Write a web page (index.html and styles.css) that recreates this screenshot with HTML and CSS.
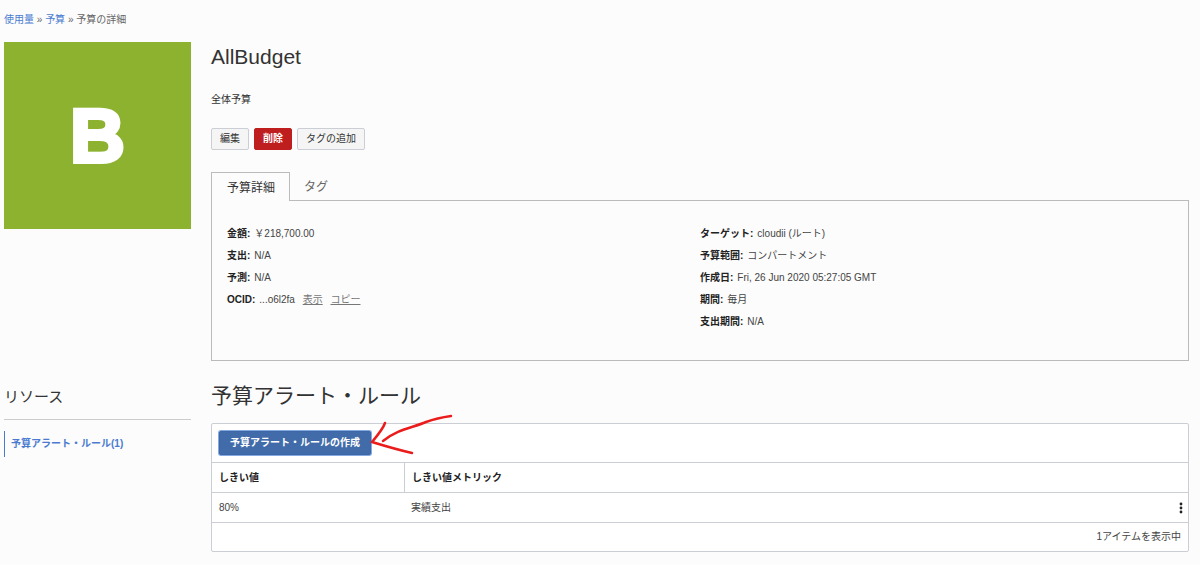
FILE: index.html
```html
<!DOCTYPE html>
<html lang="ja">
<head>
    <meta charset="UTF-8">
    <title>予算の詳細</title>
    <link rel="stylesheet" href="styles.css">
</head>
<body>
    <nav class="breadcrumb">
        <a href="#">使用量</a> » <a href="#">予算</a> » <span>予算の詳細</span>
    </nav>

    <div class="page">
        <div class="badge">B</div>

        <main class="summary">
            <h1>AllBudget</h1>
            <p class="description">全体予算</p>
            <div class="actions">
                <button type="button" class="btn">編集</button>
                <button type="button" class="btn btn-danger">削除</button>
                <button type="button" class="btn">タグの追加</button>
            </div>

            <div class="tabs" role="tablist">
                <button type="button" class="tab active" role="tab" aria-selected="true">予算詳細</button>
                <button type="button" class="tab" role="tab" aria-selected="false">タグ</button>
            </div>
            <div class="panel">
                <dl class="details">
                    <div><dt>金額:</dt><dd>￥218,700.00</dd></div>
                    <div><dt>支出:</dt><dd>N/A</dd></div>
                    <div><dt>予測:</dt><dd>N/A</dd></div>
                    <div><dt>OCID:</dt><dd class="ocid">...o6l2fa <a href="#">表示</a> <a href="#">コピー</a></dd></div>
                </dl>
                <dl class="details">
                    <div><dt>ターゲット:</dt><dd>cloudii (ルート)</dd></div>
                    <div><dt>予算範囲:</dt><dd>コンパートメント</dd></div>
                    <div><dt>作成日:</dt><dd>Fri, 26 Jun 2020 05:27:05 GMT</dd></div>
                    <div><dt>期間:</dt><dd>毎月</dd></div>
                    <div><dt>支出期間:</dt><dd>N/A</dd></div>
                </dl>
            </div>
        </main>

        <aside class="resources">
            <h3>リソース</h3>
            <a href="#rules" class="resource-link">予算アラート・ルール(1)</a>
        </aside>

        <section class="rules" id="rules">
            <h2>予算アラート・ルール</h2>
            <div class="table-box">
                <div class="toolbar">
                    <div class="create">
                        <button type="button" class="btn btn-primary">予算アラート・ルールの作成</button>
                        <svg class="arrow" width="84" height="42" viewBox="0 0 84 42" aria-hidden="true">
                            <path d="M14 5C12 11 6 18 1 24C14 28 28 32 41 35M12 23C27 11 41 10 55 4C66 0 73-1 80-2" />
                        </svg>
                    </div>
                </div>
                <table>
                    <thead>
                        <tr>
                            <th class="col-threshold">しきい値</th>
                            <th colspan="2">しきい値メトリック</th>
                        </tr>
                    </thead>
                    <tbody>
                        <tr>
                            <td>80%</td>
                            <td>実績支出</td>
                            <td class="col-menu">
                                <button type="button" class="menu" aria-label="アクション">
                                    <svg width="4" height="12" viewBox="0 0 4 12">
                                        <circle cx="2" cy="2" r="1.4" />
                                        <circle cx="2" cy="6" r="1.4" />
                                        <circle cx="2" cy="10" r="1.4" />
                                    </svg>
                                </button>
                            </td>
                        </tr>
                    </tbody>
                </table>
                <div class="table-footer">1アイテムを表示中</div>
            </div>
        </section>
    </div>
</body>
</html>
```

FILE: styles.css
```css
* {
    box-sizing: border-box;
}
body {
    margin: 0;
    padding: 12px 11px 12px 4px;
    background: #fcfcfc;
    color: #444;
    font-family: "Liberation Sans", "Noto Sans CJK JP", sans-serif;
    font-size: 10px;
    line-height: 16px;
}
a {
    color: #4a7bd0;
    text-decoration: none;
}
h1, h2, h3, p, dl, dd {
    margin: 0;
}
h1, h2, h3 {
    color: #333;
    font-weight: normal;
}
button {
    font-family: inherit;
    cursor: pointer;
}
.breadcrumb {
    margin-bottom: 14px;
    color: #666;
}
.page {
    display: grid;
    grid-template-columns: 187px minmax(0, 1fr);
    column-gap: 20px;
    row-gap: 20px;
}
.badge {
    display: flex;
    align-items: center;
    justify-content: center;
    height: 187px;
    background: #8db230;
    color: #fff;
    font-size: 76px;
    font-weight: bold;
    -webkit-text-stroke: 4px #fff;
}
h1 {
    font-size: 21px;
    line-height: 30px;
}
.description {
    margin: 20px 0;
    color: #333;
}
.actions {
    display: flex;
    gap: 5px;
    margin-bottom: 22px;
}
.btn {
    height: 22px;
    padding: 0 8px;
    border: 1px solid #ccced6;
    border-radius: 2px;
    background: #f5f5f5;
    color: #333;
    font-size: 10px;
    line-height: 16px;
}
.btn-danger {
    border-color: #bf1e1e;
    background: #bf1e1e;
    color: #fff;
    font-weight: bold;
}
.btn-primary {
    height: 24px;
    padding: 0 10px;
    border-color: #3c68a8;
    background: #426ca9;
    box-shadow: 0 0 0 1px #86a9e2;
    color: #fff;
    font-weight: bold;
}
.tabs {
    display: flex;
}
.tab {
    height: 28px;
    padding: 0 14px 2px;
    border: 0;
    background: none;
    color: #666;
    font-size: 12px;
}
.tab.active {
    height: 29px;
    margin-bottom: -1px;
    border: 1px solid #bbb;
    border-bottom: 0;
    background: #fcfcfc;
    color: #333;
    padding-left: 15px;
    z-index: 1;
}
.panel {
    display: grid;
    grid-template-columns: 1fr 1fr;
    min-height: 161px;
    padding: 22px 15px;
    border: 1px solid #bbb;
}
.details div {
    display: flex;
    gap: 4px;
    height: 22px;
    line-height: 22px;
}
.details dt {
    color: #222;
    font-weight: bold;
}
.ocid a {
    margin-left: 5px;
    color: #777;
    text-decoration: underline;
}
.resources {
    padding-top: 4px;
}
.resources h3 {
    padding-bottom: 10px;
    border-bottom: 1px solid #ccc;
    font-size: 15px;
    line-height: 24px;
}
.resource-link {
    display: block;
    margin-top: 11px;
    padding-left: 6px;
    border-left: 1px solid #4a7bd0;
    font-weight: bold;
    line-height: 26px;
}
.rules h2 {
    margin-bottom: 12px;
    font-size: 21px;
    line-height: 30px;
}
.table-box {
    border: 1px solid #ccced6;
    border-radius: 2px;
    background: #fff;
}
.toolbar {
    display: flex;
    padding: 7px;
}
.create {
    position: relative;
}
/* hand-drawn arrow pointing at the create button */
.arrow {
    position: absolute;
    top: -13px;
    left: 100%;
    overflow: visible;
    pointer-events: none;
    fill: none;
    stroke: #ea1c1c;
    stroke-width: 2.5;
    stroke-linecap: round;
    stroke-linejoin: round;
}
table {
    width: 100%;
    border-collapse: separate;
    border-spacing: 0;
    color: #444;
}
th, td {
    height: 30px;
    padding: 0 7px;
    border-top: 1px solid #ccced6;
    text-align: left;
}
th {
    color: #222;
}
th + th {
    border-left: 1px solid #ccced6;
}
.col-threshold {
    width: 192px;
}
.col-menu {
    width: 40px;
    padding-right: 5px;
    text-align: right;
}
.menu {
    padding: 0;
    border: 0;
    background: none;
    vertical-align: middle;
}
.menu svg {
    display: block;
    fill: #222;
}
.table-footer {
    padding: 6px 7px;
    border-top: 1px solid #ccced6;
    text-align: right;
}
```
